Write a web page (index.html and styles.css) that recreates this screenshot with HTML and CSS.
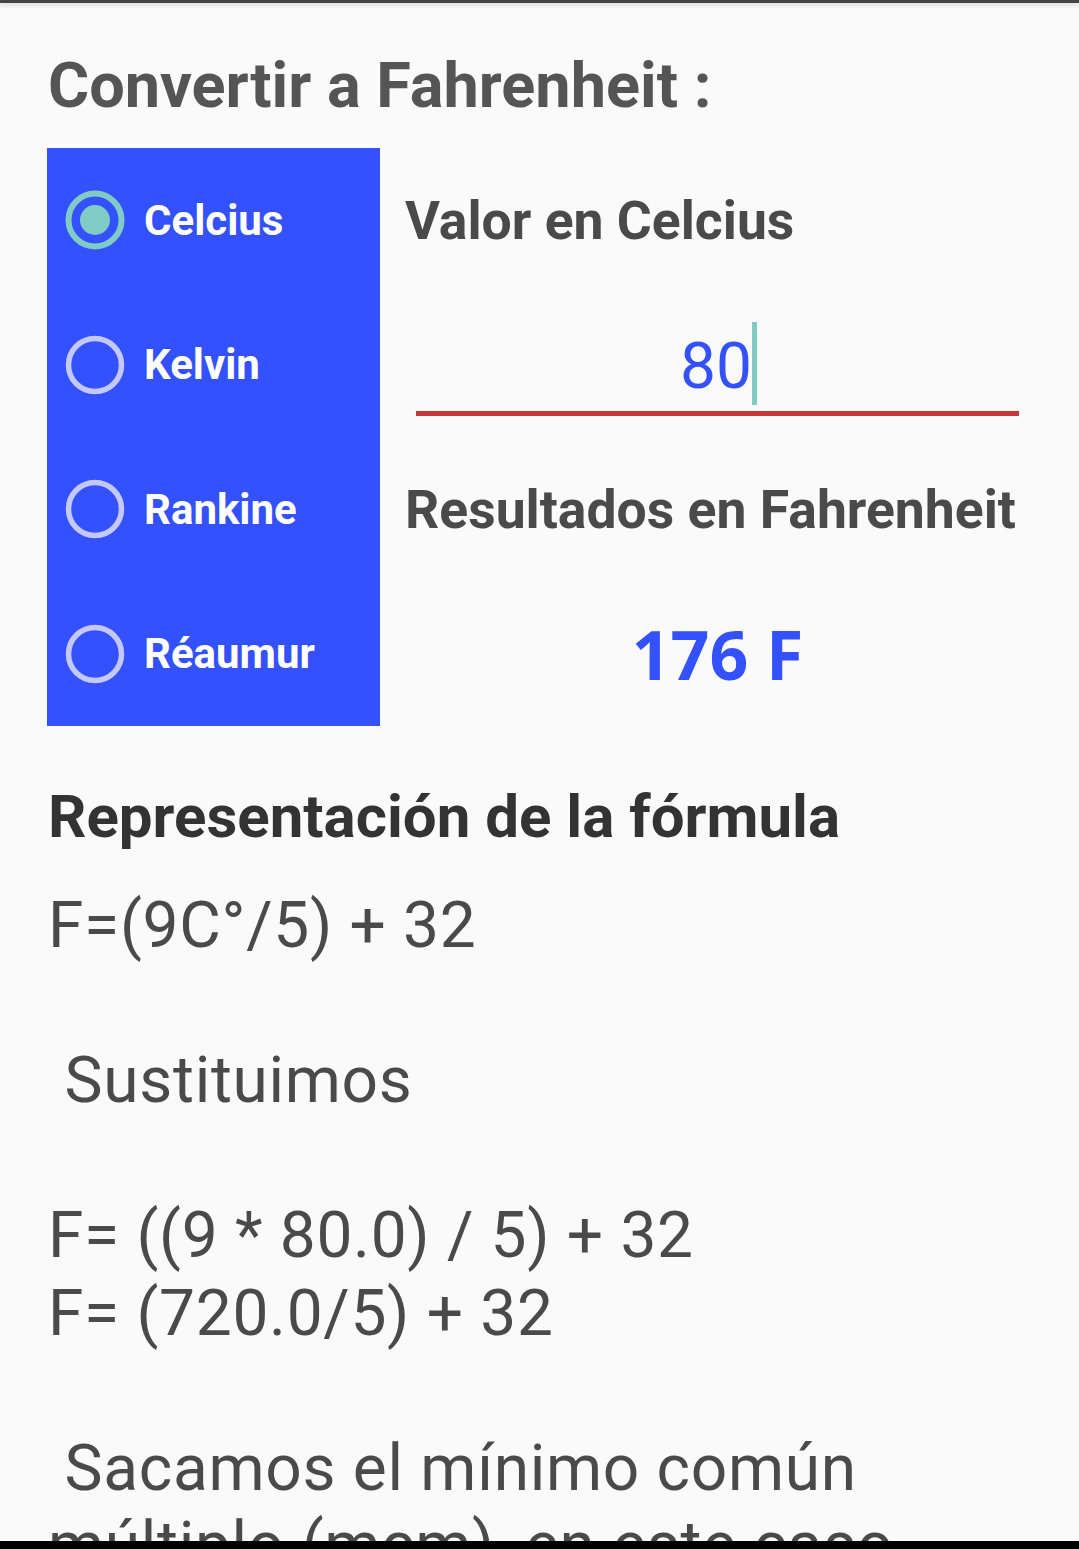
FILE: index.html
```html
<!DOCTYPE html>
<html lang="es">
<head>
<meta charset="utf-8">
<title>Convertir a Fahrenheit</title>
<link rel="stylesheet" href="styles.css">
</head>
<body>
<div class="statusbar"></div>
<main class="content">
  <h1 class="title">Convertir a Fahrenheit :</h1>
  <section class="converter">
    <div class="units">
      <div class="unit">
        <svg class="radio" viewBox="0 0 60 60" width="60" height="60"><circle cx="30" cy="30" r="26.5" fill="none" stroke="#80cbc4" stroke-width="6"/><circle cx="30" cy="30" r="15" fill="#80cbc4"/></svg>
        <span class="unit-label">Celcius</span>
      </div>
      <div class="unit">
        <svg class="radio" viewBox="0 0 60 60" width="60" height="60"><circle cx="30" cy="30" r="26.5" fill="none" stroke="#c3c9ff" stroke-width="5.5"/></svg>
        <span class="unit-label">Kelvin</span>
      </div>
      <div class="unit">
        <svg class="radio" viewBox="0 0 60 60" width="60" height="60"><circle cx="30" cy="30" r="26.5" fill="none" stroke="#c3c9ff" stroke-width="5.5"/></svg>
        <span class="unit-label">Rankine</span>
      </div>
      <div class="unit">
        <svg class="radio" viewBox="0 0 60 60" width="60" height="60"><circle cx="30" cy="30" r="26.5" fill="none" stroke="#c3c9ff" stroke-width="5.5"/></svg>
        <span class="unit-label">Réaumur</span>
      </div>
    </div>
    <div class="fields">
      <div class="field-row"><span class="field-label">Valor en Celcius</span></div>
      <div class="field-row input-row">
        <div class="input"><span class="input-value">80</span><span class="caret"></span></div>
      </div>
      <div class="field-row"><span class="field-label">Resultados en Fahrenheit</span></div>
      <div class="field-row result-row"><span class="result">176 F</span></div>
    </div>
  </section>
  <h2 class="formula-title">Representación de la fórmula</h2>
  <p class="formula">F=(9C°/5) + 32

 Sustituimos

F= ((9 * 80.0) / 5) + 32
F= (720.0/5) + 32

 Sacamos el mínimo común múltiplo (mcm), en este caso</p>
</main>
<div class="navbar"></div>
</body>
</html>
```

FILE: styles.css
```css
html, body {
  margin: 0;
  padding: 0;
  background: #fafafa;
  height: 100%;
  overflow: hidden;
}

body {
  font-family: Roboto, "Liberation Sans", sans-serif;
}

.statusbar {
  height: 3px;
  background: #444444;
  box-shadow: 0 2px 5px rgba(0, 0, 0, 0.18);
}

.content {
  padding: 46px 48px 0 48px;
}

.title {
  margin: 0;
  font-size: 63px;
  line-height: 73px;
  font-weight: 700;
  color: #555555;
}

.converter {
  margin-top: 26px;
  margin-left: -1px;
  display: flex;
}

.units {
  width: 333px;
  flex: none;
  height: 578px;
  background: #3351fe;
  display: grid;
  grid-template-rows: repeat(4, 1fr);
  padding-left: 18px;
  box-sizing: border-box;
}

.unit {
  display: flex;
  align-items: center;
  gap: 19px;
}

.radio {
  flex: none;
  display: block;
}

.unit-label {
  color: #ffffff;
  font-size: 42px;
  font-weight: 700;
}

.fields {
  flex: 1;
  height: 578px;
  display: grid;
  grid-template-rows: repeat(4, 1fr);
  margin-right: -48px;
  padding-left: 25px;
}

.field-row {
  display: flex;
  align-items: center;
}

.field-label {
  font-size: 53.5px;
  font-weight: 700;
  color: #4a4a4a;
  white-space: nowrap;
}

.input-row {
  align-items: flex-end;
  padding-left: 11px;
  padding-right: 60px;
  padding-bottom: 21px;
}

.input {
  flex: 1;
  display: flex;
  justify-content: center;
  align-items: flex-end;
  padding-bottom: 6px;
  border-bottom: 5px solid #c73838;
}

.input-value {
  font-size: 64px;
  line-height: 83px;
  color: #3351fe;
  position: relative;
  top: 3px;
  left: 2px;
}

.caret {
  width: 5px;
  height: 83px;
  margin-left: 2px;
  background: #80cbc4;
}

.result-row {
  justify-content: center;
  padding-left: 11px;
  padding-right: 60px;
}

.result {
  font-family: "Open Sans", "Noto Sans", sans-serif;
  font-size: 68px;
  font-weight: 700;
  color: #3351fe;
}

.formula-title {
  margin: 56px 0 0 0;
  font-size: 60px;
  line-height: 70px;
  font-weight: 700;
  color: #333333;
}

.formula {
  margin: 35px 0 0 0;
  font-size: 64px;
  line-height: 77.5px;
  letter-spacing: 0.7px;
  color: #4a4a4a;
  white-space: pre-wrap;
}

.navbar {
  position: fixed;
  left: 0;
  right: 0;
  bottom: 0;
  height: 8px;
  background: #000000;
}
```
